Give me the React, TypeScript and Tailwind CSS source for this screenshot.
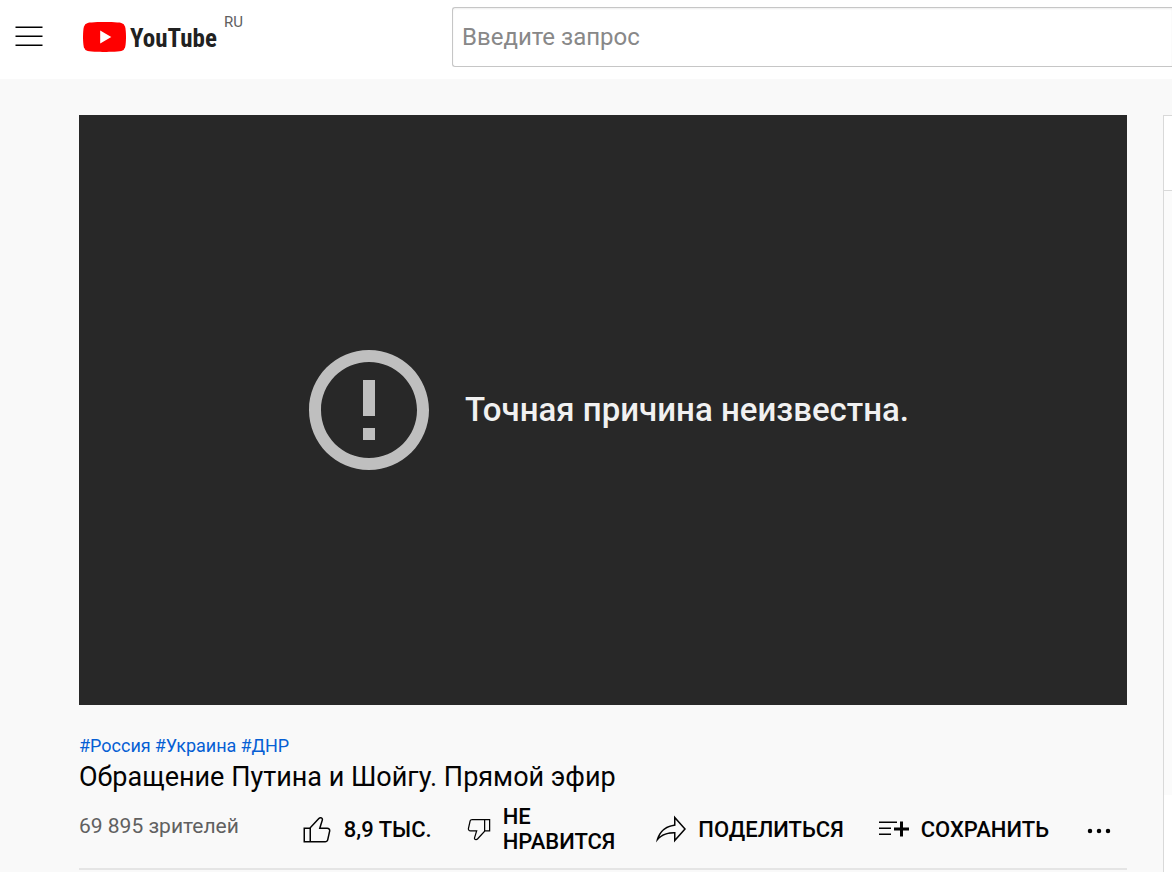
import React from 'react';

const ICONS = {
  menu: 'M21,6H3V5h18V6z M21,11H3v1h18V11z M21,17H3v1h18V17z',
  like: 'M18.77,11h-4.23l1.52-4.94C16.38,5.03,15.54,4,14.38,4c-0.58,0-1.14,0.24-1.52,0.65L7,11H3v10h4h1h9.43c1.06,0,1.98-0.67,2.19-1.61l1.34-6C21.23,12.15,20.18,11,18.77,11z M7,20H4v-8h3V20z M19.98,13.17l-1.34,6C18.54,19.65,18.03,20,17.43,20H8v-8.61l5.6-6.06C13.79,5.12,14.08,5,14.38,5c0.26,0,0.5,0.11,0.63,0.3c0.07,0.1,0.15,0.26,0.09,0.47l-1.52,4.94L13.18,12h1.35h4.23c0.41,0,0.8,0.17,1.03,0.46C19.92,12.61,20.05,12.86,19.98,13.17z',
  dislike: 'M17,4h-1H6.57C5.5,4,4.59,4.67,4.38,5.61l-1.34,6C2.77,12.85,3.82,14,5.23,14h4.23l-1.52,4.94C7.62,19.97,8.46,21,9.62,21c0.58,0,1.14-0.24,1.52-0.65L17,14h4V4H17z M10.4,19.67C10.21,19.88,9.92,20,9.62,20c-0.26,0-0.5-0.11-0.63-0.3c-0.07-0.1-0.15-0.26-0.09-0.47l1.52-4.94l0.4-1.29H9.46H5.23c-0.41,0-0.8-0.17-1.03-0.46c-0.12-0.15-0.25-0.4-0.18-0.72l1.34-6C5.46,5.35,5.97,5,6.57,5H16v8.61L10.4,19.67z M20,13h-3V5h3V13z',
  share: 'M15,5.63L20.66,12L15,18.37V15v-1h-1c-3.96,0-7.14,1-9.75,3.09c1.84-4.07,5.11-6.4,9.89-7.1L15,9.86V9V5.63 M14,3v6C6.22,10.13,3.11,15.33,2,21c2.78-3.97,6.44-6,12-6v6l8-9L14,3z',
  save: 'M22,13h-4v4h-2v-4h-4v-2h4V7h2v4h4V13z M14,7H2v1h12V7z M2,12h8v-1H2V12z M2,16h8v-1H2V16z',
  more: 'M7.5,12a1.5,1.5 0 1,1 -3,0a1.5,1.5 0 1,1 3,0z M13.5,12a1.5,1.5 0 1,1 -3,0a1.5,1.5 0 1,1 3,0z M19.5,12a1.5,1.5 0 1,1 -3,0a1.5,1.5 0 1,1 3,0z',
  error: 'M11 15h2v2h-2zm0-8h2v6h-2zm.99-5C6.47 2 2 6.48 2 12s4.47 10 9.99 10C17.52 22 22 17.52 22 12S17.52 2 11.99 2zM12 20c-4.42 0-8-3.58-8-8s3.58-8 8-8 8 3.58 8 8-3.58 8-8 8z'
};

interface IconProps {
  name: keyof typeof ICONS;
  className?: string;
}

const Icon: React.FC<IconProps> = ({ name, className = 'size-9' }) => (
  <svg viewBox="0 0 24 24" fill="currentColor" aria-hidden="true" className={`shrink-0 ${className}`}>
    <path d={ICONS[name]} />
  </svg>
);

const TAGS = ['#Россия', '#Украина', '#ДНР'];

const Header: React.FC = () => (
  <header className="flex h-[79px] items-start bg-white pl-[11px]">
    <button type="button" aria-label="Меню" className="mt-[19px]">
      <Icon name="menu" />
    </button>
    <a href="#home" className="ml-9 mt-[14px] flex items-start">
      <svg viewBox="0 0 43 30" aria-hidden="true" className="mt-2 h-[30px] w-[43px]">
        <path
          fill="#ff0000"
          d="M42.1 4.7A5.4 5.4 0 0 0 38.3 0.9C34.9 0 21.5 0 21.5 0S8.1 0 4.7 0.9A5.4 5.4 0 0 0 0.9 4.7C0 8.1 0 15 0 15S0 21.9 0.9 25.3A5.4 5.4 0 0 0 4.7 29.1C8.1 30 21.5 30 21.5 30S34.9 30 38.3 29.1A5.4 5.4 0 0 0 42.1 25.3C43 21.9 43 15 43 15S43 8.1 42.1 4.7Z"
        />
        <path fill="#ffffff" d="M17.2 21.4L28.3 15L17.2 8.6Z" />
      </svg>
      <span className="ml-1 mt-[6px] font-['Roboto_Condensed','Liberation_Sans_Narrow','Roboto',sans-serif] text-[25px] leading-[38px] font-bold text-[#212121]">
        YouTube
      </span>
      <span className="ml-[7px] text-[15px] leading-4 text-[#606060]">RU</span>
    </a>
    <form className="ml-auto mt-[7px] w-[720px] shrink-0">
      <input
        type="text"
        aria-label="Введите запрос"
        placeholder="Введите запрос"
        className="h-[60px] w-full rounded-l-[3px] border border-r-0 border-[#c6c6c6] bg-white px-[9px] text-2xl text-black shadow-[inset_0_1px_2px_#eeeeee] outline-none placeholder:text-[#888888]"
      />
    </form>
  </header>
);

const Player: React.FC = () => (
  <div className="flex aspect-[1048/590] w-full items-center justify-center gap-6 bg-[#282828]">
    <Icon name="error" className="size-36 text-[#bfbfbf]" />
    <p className="text-[33px] leading-10 font-medium text-[#f1f1f1]">Точная причина неизвестна.</p>
  </div>
);

const VideoInfo: React.FC = () => (
  <section className="border-b-2 border-[#e5e5e5] pt-[29px]">
    <div className="flex gap-1 text-lg leading-6 text-[#065fd4]">
      {TAGS.map(tag => (
        <a key={tag} href={`#${tag}`}>{tag}</a>
      ))}
    </div>
    <h1 className="pt-px text-[27px] leading-9 text-[#030303]">Обращение Путина и Шойгу. Прямой эфир</h1>
    <div className="flex h-[73px] items-center justify-between pr-[10px] pb-[5px]">
      <p className="pb-[6px] text-[21px] leading-8 text-[#606060]">69 895 зрителей</p>
      <div className="flex items-center gap-8 text-[22px] leading-[25px] font-medium text-[#030303]">
        <button type="button" className="flex items-center gap-[9px]">
          <Icon name="like" />
          <span>8,9 ТЫС.</span>
        </button>
        <button type="button" className="flex items-center gap-[9px] pr-[6px] text-left">
          <Icon name="dislike" className="size-[30px]" />
          <span>НЕ<br />НРАВИТСЯ</span>
        </button>
        <button type="button" className="flex items-center gap-[9px]">
          <Icon name="share" />
          <span>ПОДЕЛИТЬСЯ</span>
        </button>
        <button type="button" className="flex items-center gap-[9px]">
          <Icon name="save" />
          <span>СОХРАНИТЬ</span>
        </button>
        <button type="button" aria-label="Ещё" className="pt-1">
          <Icon name="more" />
        </button>
      </div>
    </div>
  </section>
);

const ChatPanel: React.FC = () => (
  <aside className="flex w-[9px] shrink-0 flex-col border-t border-l border-[#d9d9d9]">
    <div className="h-[75px] border-b border-[#d9d9d9] bg-white"></div>
    <div className="flex-1 bg-[#fbfbfb]"></div>
    <div className="h-[77px] bg-white"></div>
  </aside>
);

const App: React.FC = () => (
  <div className="flex min-h-screen flex-col overflow-hidden bg-[#f9f9f9] font-['Roboto',sans-serif]">
    <Header />
    <div className="flex flex-1 gap-9 pt-9 pl-[79px]">
      <main className="min-w-0 flex-1">
        <Player />
        <VideoInfo />
      </main>
      <ChatPanel />
    </div>
  </div>
);

export default App;
